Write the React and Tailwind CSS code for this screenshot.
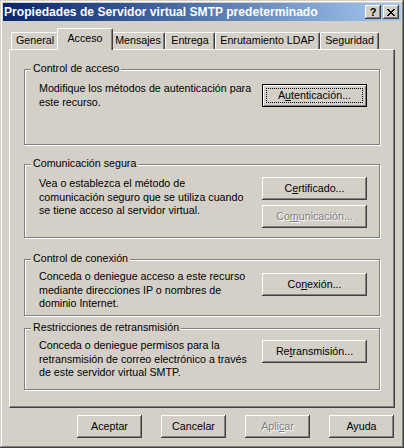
const tabs = [
  { label: "General", w: "w-[48px]" },
  { label: "Acceso", w: "w-[56px]", active: true },
  { label: "Mensajes", w: "w-[54px]" },
  { label: "Entrega", w: "w-[50px]" },
  { label: "Enrutamiento LDAP", w: "w-[105px]" },
  { label: "Seguridad", w: "w-[59px]" },
];

function Btn({ children, className = "", disabled, isDefault }) {
  if (isDefault) {
    return (
      <div className={`border border-black bg-[#d4d0c8] ${className}`}>
        <div className="h-full p-[3px] shadow-[inset_1px_1px_#fff,inset_-1px_-1px_#808080]">
          <div className="h-full border border-dotted border-black flex items-center justify-center">
            {children}
          </div>
        </div>
      </div>
    );
  }
  return (
    <div
      className={`bg-[#d4d0c8] flex items-center justify-center shadow-[inset_-1px_-1px_#404040,inset_1px_1px_#fff,inset_-2px_-2px_#808080] ${
        disabled ? "text-[#808080] [text-shadow:1px_1px_0_#fff]" : ""
      } ${className}`}
    >
      {children}
    </div>
  );
}

function Group({ title, className, textClass, btnClass, lines, children }) {
  return (
    <div className={`relative border border-[#808080] shadow-[inset_1px_1px_#fff,1px_1px_#fff] flex justify-between pl-[14px] pr-[12px] ${className}`}>
      <span className="absolute left-[6px] -top-[8px] px-[2px] bg-[#d4d0c8] leading-[13px]">{title}</span>
      <div className={`leading-[13.5px] ${textClass}`}>
        {lines.map((l) => (
          <div key={l} className="whitespace-nowrap">{l}</div>
        ))}
      </div>
      <div className={`flex flex-col gap-[5px] ${btnClass}`}>{children}</div>
    </div>
  );
}

export default function App() {
  return (
    <div className="w-[404px] h-[448px] bg-[#d4d0c8] p-[3px] text-[10.7px] text-black font-['Liberation_Sans',Arial,sans-serif] shadow-[inset_-1px_-1px_#404040,inset_1px_1px_#d4d0c8,inset_-2px_-2px_#808080,inset_2px_2px_#fff]">
      {/* barra de título */}
      <div className="h-[18px] flex items-center justify-between bg-gradient-to-r from-[#0a246a] to-[#a6caf0] pl-[1px] pr-[2px]">
        <span className="text-white font-bold text-[12.1px] whitespace-nowrap">
          Propiedades de Servidor virtual SMTP predeterminado
        </span>
        <div className="flex gap-[2px]">
          <div className="w-[16px] h-[14px] bg-[#d4d0c8] flex items-center justify-center font-bold text-[11px] leading-none shadow-[inset_-1px_-1px_#404040,inset_1px_1px_#fff,inset_-2px_-2px_#808080]">
            ?
          </div>
          <div className="w-[16px] h-[14px] bg-[#d4d0c8] flex items-center justify-center shadow-[inset_-1px_-1px_#404040,inset_1px_1px_#fff,inset_-2px_-2px_#808080]">
            <svg width="8" height="7" viewBox="0 0 8 7" shapeRendering="crispEdges">
              <path
                d="M0 0h2v1h-2zM6 0h2v1h-2zM1 1h2v1h-2zM5 1h2v1h-2zM2 2h4v1h-4zM3 3h2v1h-2zM2 4h4v1h-4zM1 5h2v1h-2zM5 5h2v1h-2zM0 6h2v1h-2zM6 6h2v1h-2z"
                fill="#000"
              />
            </svg>
          </div>
        </div>
      </div>

      {/* pestañas */}
      <div className="mt-[7px] mx-[6px] h-[21px] flex items-end pl-[2px]">
        {tabs.map((t) =>
          t.active ? (
            <div
              key={t.label}
              className={`${t.w} h-[22px] -mb-[1px] -mx-[2px] relative z-10 bg-[#d4d0c8] border-t border-l border-white border-r border-r-[#404040] rounded-t-[2px] shadow-[inset_-1px_0_#808080] text-center pt-[3px] leading-[13px] whitespace-nowrap`}
            >
              {t.label}
            </div>
          ) : (
            <div
              key={t.label}
              className={`${t.w} h-[17px] bg-[#d4d0c8] border-t border-l border-white border-r border-r-[#404040] rounded-t-[2px] shadow-[inset_-1px_0_#808080] text-center pt-[1px] leading-[13px] whitespace-nowrap`}
            >
              {t.label}
            </div>
          )
        )}
      </div>

      {/* panel */}
      <div className="mx-[6px] h-[359px] border-t border-l border-white border-r border-b border-r-[#404040] border-b-[#404040] shadow-[inset_-1px_-1px_#808080] pt-[19px] px-[14px]">
        <Group
          title="Control de acceso"
          className="h-[76px]"
          textClass="mt-[12px]"
          btnClass="mt-[14px]"
          lines={["Modifique los métodos de autenticación para", "este recurso."]}
        >
          <Btn isDefault className="w-[105px] h-[23px]">
            <span>A<u>u</u>tenticación...</span>
          </Btn>
        </Group>

        <Group
          title="Comunicación segura"
          className="h-[74px] mt-[19px]"
          textClass="mt-[12px]"
          btnClass="mt-[12px]"
          lines={[
            "Vea o establezca el método de",
            "comunicación seguro que se utiliza cuando",
            "se tiene acceso al servidor virtual.",
          ]}
        >
          <Btn className="w-[105px] h-[23px]">
            <span>C<u>e</u>rtificado...</span>
          </Btn>
          <Btn disabled className="w-[105px] h-[23px]">
            <span>Co<u>m</u>unicación...</span>
          </Btn>
        </Group>

        <Group
          title="Control de conexión"
          className="h-[57px] mt-[21px]"
          textClass="mt-[10px]"
          btnClass="mt-[13px]"
          lines={[
            "Conceda o deniegue acceso a este recurso",
            "mediante direcciones IP o nombres de",
            "dominio Internet.",
          ]}
        >
          <Btn className="w-[105px] h-[23px]">
            <span>Co<u>n</u>exión...</span>
          </Btn>
        </Group>

        <Group
          title="Restricciones de retransmisión"
          className="h-[62px] mt-[12px]"
          textClass="mt-[10px]"
          btnClass="mt-[11px]"
          lines={[
            "Conceda o deniegue permisos para la",
            "retransmisión de correo electrónico a través",
            "de este servidor virtual SMTP.",
          ]}
        >
          <Btn className="w-[105px] h-[23px]">
            <span>Re<u>t</u>ransmisión...</span>
          </Btn>
        </Group>
      </div>

      {/* botones inferiores */}
      <div className="mt-[7px] flex justify-end gap-[19px] pr-[7px]">
        <Btn className="w-[65px] h-[23px]">Aceptar</Btn>
        <Btn className="w-[65px] h-[23px]">Cancelar</Btn>
        <Btn disabled className="w-[65px] h-[23px]">
          <span>Apli<u>c</u>ar</span>
        </Btn>
        <Btn className="w-[65px] h-[23px]">Ayuda</Btn>
      </div>
    </div>
  );
}
